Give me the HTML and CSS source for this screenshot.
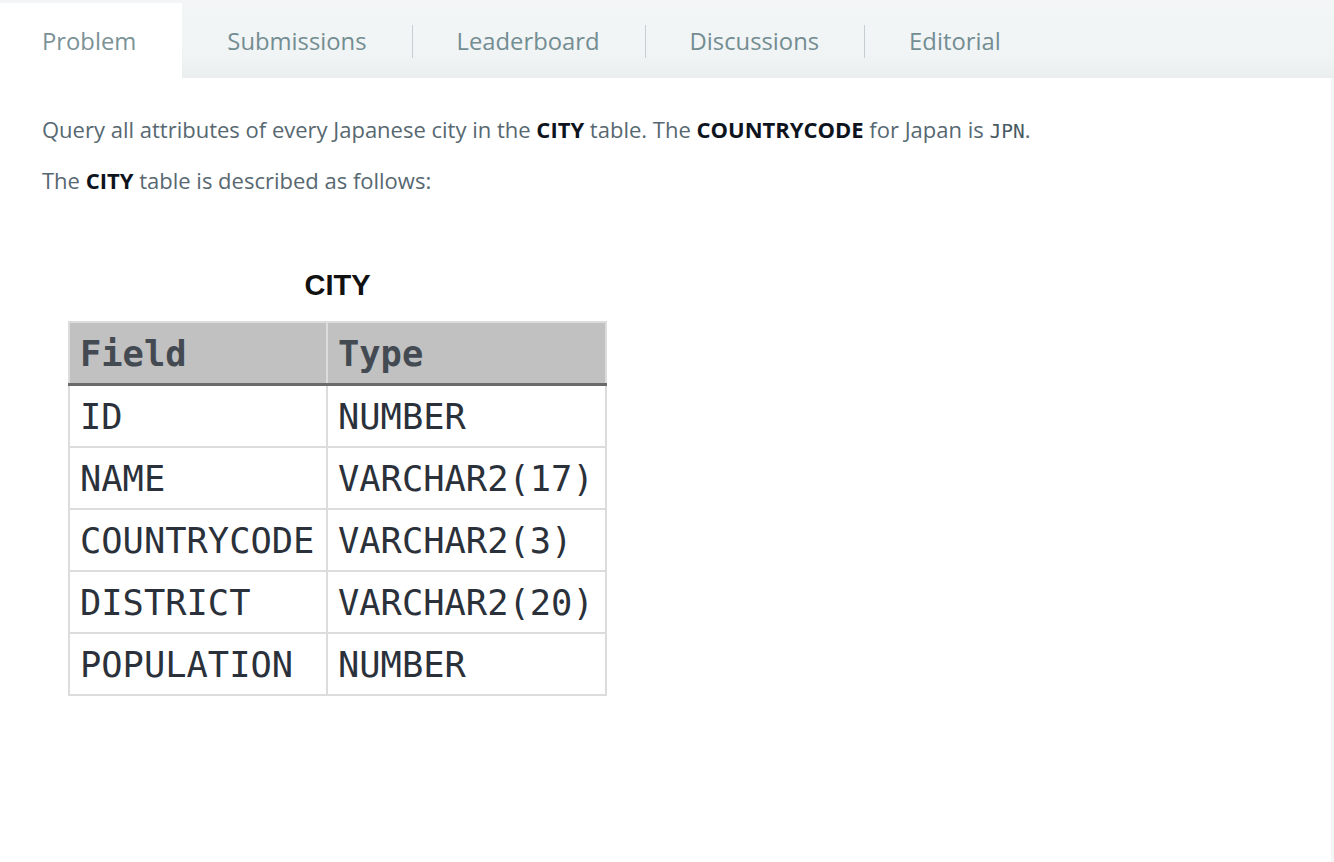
FILE: index.html
```html
<!DOCTYPE html>
<html>
<head>
<meta charset="utf-8">
<link rel="stylesheet" href="styles.css">
</head>
<body>
<div class="page">
  <nav class="tabs">
    <div class="tab active">Problem</div>
    <div class="tab">Submissions</div>
    <div class="tab sep">Leaderboard</div>
    <div class="tab sep">Discussions</div>
    <div class="tab sep">Editorial</div>
  </nav>
  <main class="panel">
    <p class="para">Query all attributes of every Japanese city in the <strong>CITY</strong> table. The <strong>COUNTRYCODE</strong> for Japan is <code>JPN</code>.</p>
    <p class="para">The <strong>CITY</strong> table is described as follows:</p>
    <figure class="schema">
      <div class="caption">CITY</div>
      <table class="grid">
        <thead>
          <tr><th class="c1">Field</th><th>Type</th></tr>
        </thead>
        <tbody>
          <tr><td>ID</td><td>NUMBER</td></tr>
          <tr><td>NAME</td><td>VARCHAR2(17)</td></tr>
          <tr><td>COUNTRYCODE</td><td>VARCHAR2(3)</td></tr>
          <tr><td>DISTRICT</td><td>VARCHAR2(20)</td></tr>
          <tr><td>POPULATION</td><td>NUMBER</td></tr>
        </tbody>
      </table>
    </figure>
  </main>
</div>
</body>
</html>
```
FILE: styles.css
```css
html, body {
  margin: 0;
  padding: 0;
  background: #f3f5f6;
}
.page {
  padding-top: 3px;
  min-height: 859px;
  display: flex;
  flex-direction: column;
}
.tabs {
  display: flex;
  height: 75px;
  background: linear-gradient(#f3f6f7 0%, #f1f4f5 70%, #eaeeef 100%);
}
.tab {
  font-family: "Open Sans", sans-serif;
  font-size: 23.8px;
  color: #738d92;
  padding: 0 45px 0 45px;
  display: flex;
  align-items: center;
  position: relative;
}
.tab.active {
  background: #fff;
  padding: 0 46px 0 42px;
  color: #7b9296;
}
.tab.sep::before {
  content: "";
  position: absolute;
  left: 0;
  top: 22px;
  height: 33px;
  border-left: 1px solid #c5cfd1;
}
.panel {
  flex: 1;
  background: #fff;
  margin-right: 3px;
  padding: 35px 42px 40px 42px;
}
.para {
  font-family: "Open Sans", sans-serif;
  font-size: 22px;
  line-height: 32px;
  color: #576871;
  margin: 0 0 16px 0;
}
.para strong {
  color: #0e141e;
  font-weight: 700;
}
.para code {
  font-family: "DejaVu Sans Mono", monospace;
  font-size: 19.5px;
  color: #4a5a63;
}
.schema {
  margin: 72px 0 0 26px;
  width: 539px;
}
.caption {
  font-family: "Liberation Sans", Arial, sans-serif;
  font-weight: 700;
  font-size: 29px;
  line-height: 34px;
  color: #111;
  text-align: center;
  margin-bottom: 19px;
}
.grid {
  border-collapse: collapse;
  width: 539px;
  font-family: "DejaVu Sans Mono", monospace;
  font-size: 35.4px;
  color: #2b313a;
}
.grid th, .grid td {
  border: 2px solid #dcdcdc;
  height: 60px;
  padding: 0 10px;
  text-align: left;
  font-weight: 400;
}
.grid th {
  background: #c0c1c0;
  font-weight: 700;
  color: #444a52;
  border-bottom: 3px solid #6a6a6a;
}
.grid .c1 {
  width: 236px;
}
```
